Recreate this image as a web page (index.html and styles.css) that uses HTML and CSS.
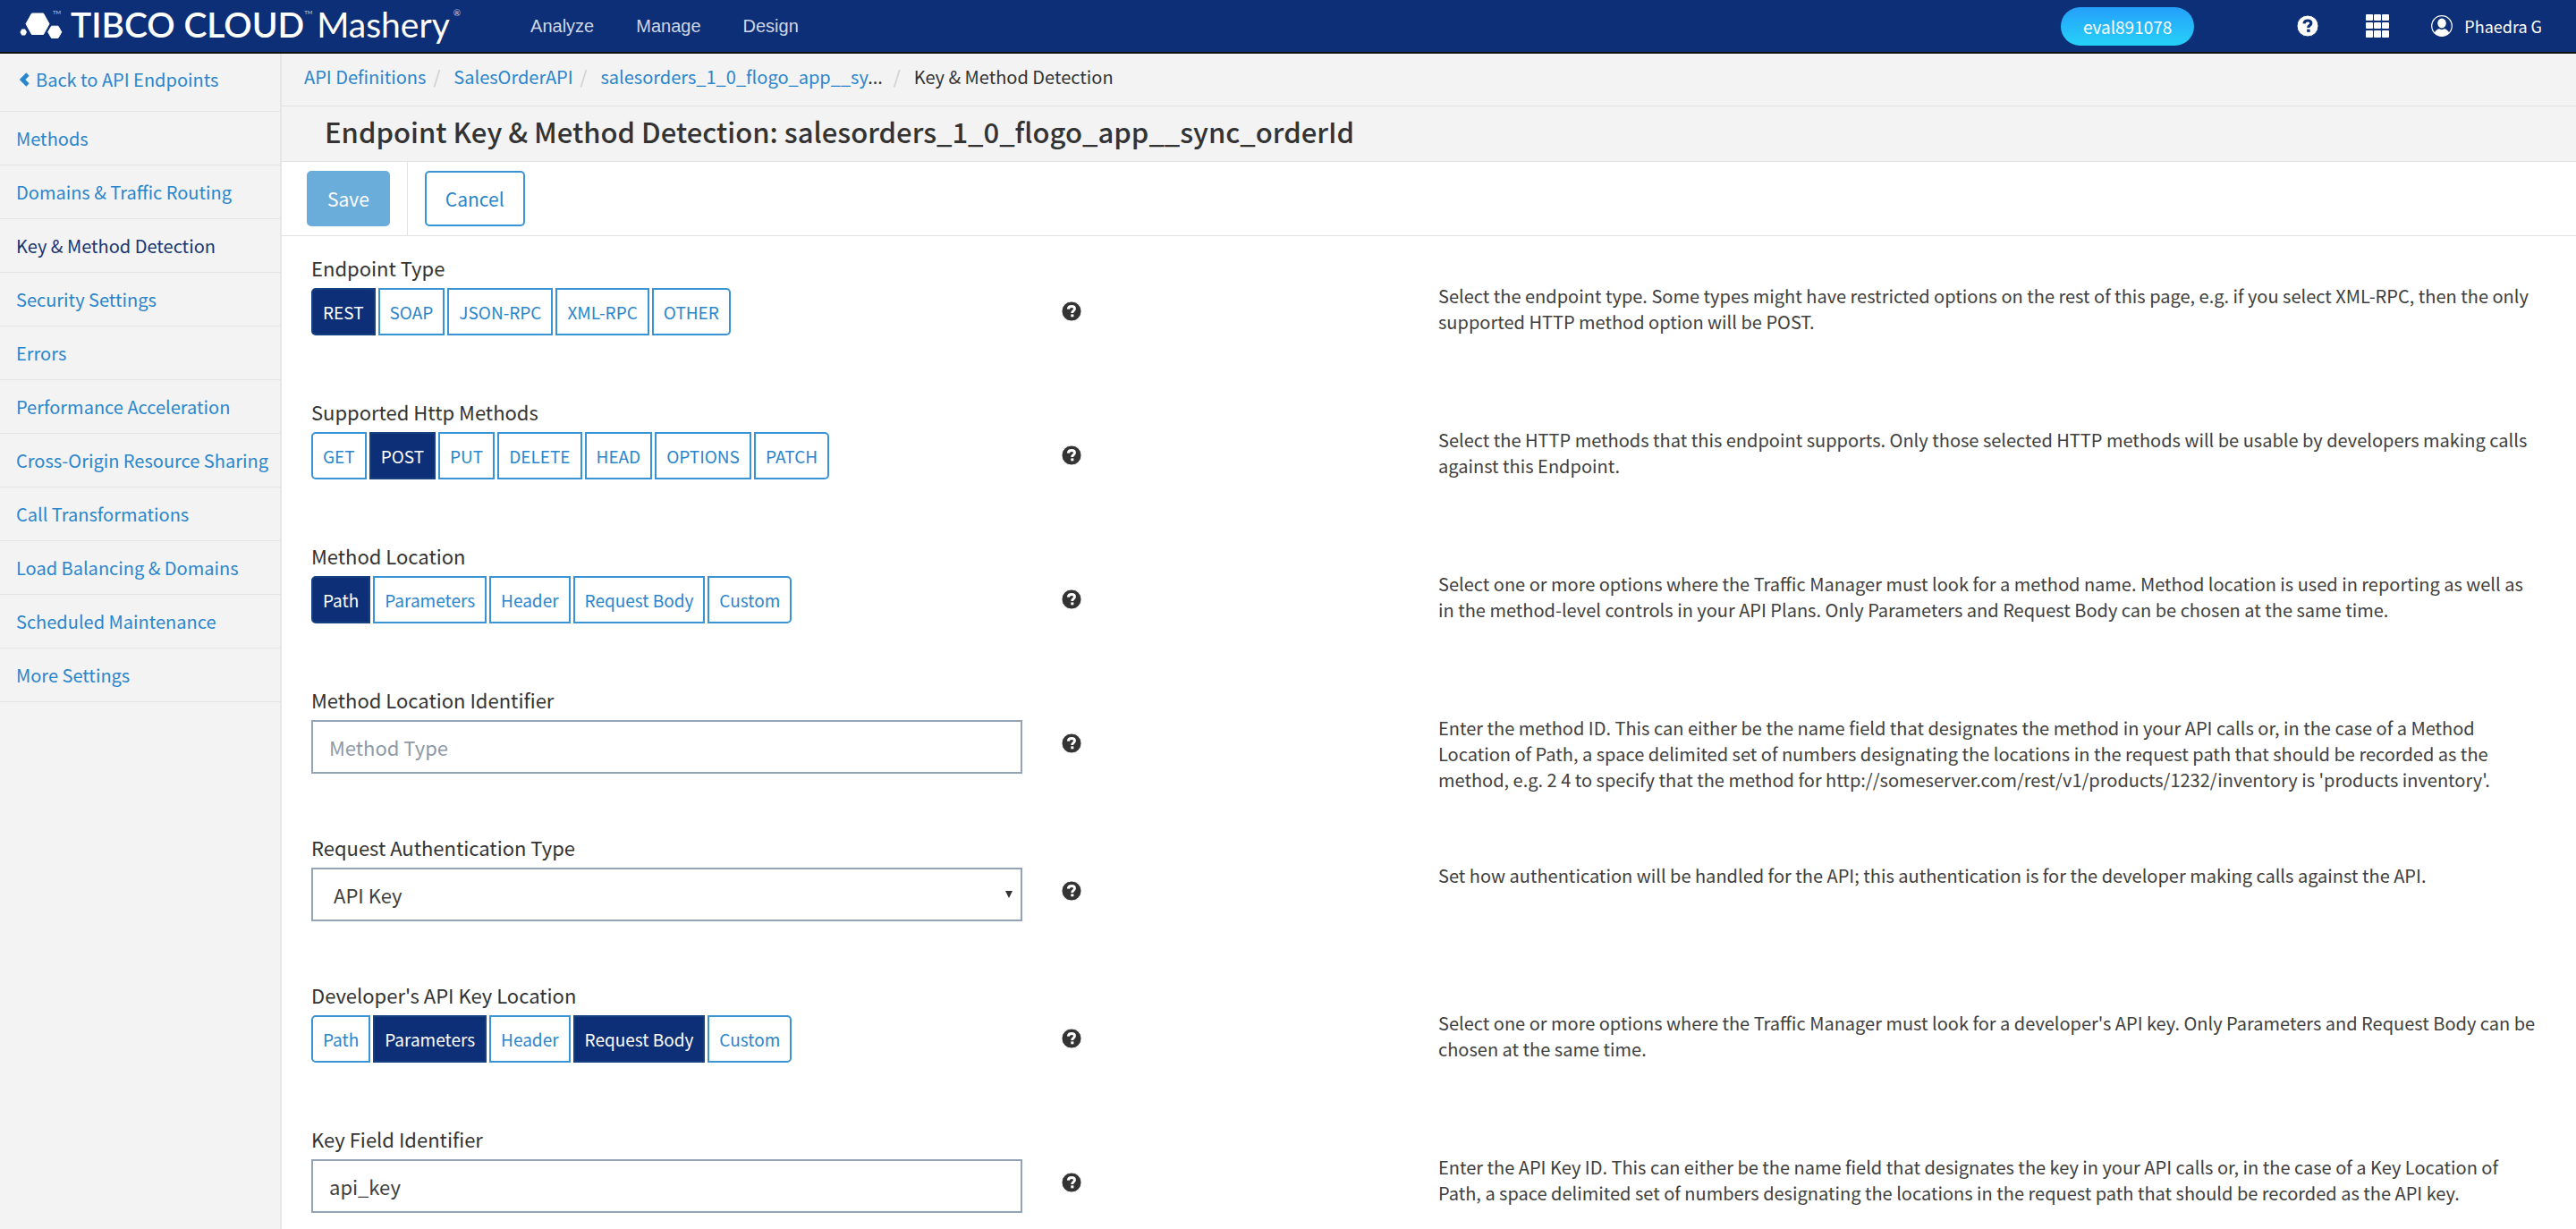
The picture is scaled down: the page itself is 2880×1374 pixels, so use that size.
FILE: index.html
```html
<!DOCTYPE html>
<html lang="en">
<head>
<meta charset="utf-8">
<title>Key &amp; Method Detection - TIBCO Cloud Mashery</title>
<link rel="stylesheet" href="styles.css">
</head>
<body>
<svg class="sprite" aria-hidden="true">
  <symbol id="help" viewBox="0 0 24 24">
    <circle cx="12" cy="12" r="12" fill="currentColor"/>
    <path class="mark" d="M8 9.300C8.200 7 9.900 6 12.100 6c2.200 0 3.700 1.100 3.700 3 0 2.500-3 2.500-3 4.600v.5" fill="none" stroke-width="3.200"/>
    <rect class="dot" x="11.200" y="15.700" width="3.400" height="3.200"/>
  </symbol>
</svg>

<header class="topbar">
  <a class="brand" href="#" aria-label="TIBCO Cloud Mashery">
    <svg class="brand-mark" viewBox="22 12 48 32" width="48" height="32" aria-hidden="true">
      <path d="M35.500 15h13L55 26.700l-6.500 11.800h-13L29 26.700z" fill="#fff" stroke="#fff" stroke-linejoin="round"/>
      <path d="M57.500 29.200h7.500l3.800 6.600-3.800 6.700h-7.500l-3.800-6.700z" fill="#fff" stroke="#fff" stroke-linejoin="round"/>
      <path d="M24.400 32.500h3.600l2 3.500-2 3.500h-3.600l-2-3.500z" fill="#fff"/>
      <text x="59" y="16" class="brand-mark-tm">TM</text>
    </svg>
    <span class="brand-name">TIBCO CLOUD</span>
    <span class="brand-tm">TM</span>
    <span class="brand-product">Mashery</span>
    <span class="brand-reg">®</span>
  </a>
  <nav class="topnav">
    <a href="#">Analyze</a>
    <a href="#">Manage</a>
    <a href="#">Design</a>
  </nav>
  <div class="tools">
    <button class="org" type="button">eval891078</button>
    <button class="tool tool-help" type="button" aria-label="Help"><svg width="24" height="24"><use href="#help"/></svg></button>
    <button class="tool tool-apps" type="button" aria-label="Apps">
      <svg width="26" height="26" viewBox="0 0 26 26" fill="#fff">
        <rect x="0" y="0" width="8" height="7" rx="1"/><rect x="9" y="0" width="8" height="7" rx="1"/><rect x="18" y="0" width="8" height="7" rx="1"/>
        <rect x="0" y="9" width="8" height="7" rx="1"/><rect x="9" y="9" width="8" height="7" rx="1"/><rect x="18" y="9" width="8" height="7" rx="1"/>
        <rect x="0" y="18" width="8" height="8" rx="1"/><rect x="9" y="18" width="8" height="8" rx="1"/><rect x="18" y="18" width="8" height="8" rx="1"/>
      </svg>
    </button>
    <button class="tool user" type="button">
      <svg width="24" height="24" viewBox="0 0 24 24">
        <circle cx="12" cy="12" r="11.300" fill="none" stroke="#fff" stroke-width="1.200"/>
        <ellipse cx="12" cy="9" rx="4.800" ry="5.400" fill="#fff"/>
        <path d="M3.800 19.500c1.400-2.700 3.600-4 5.400-4.200 1.800 1.100 3.800 1.100 5.600 0 1.800.2 4 1.500 5.400 4.200A11.300 11.300 0 0 1 12 23.300a11.300 11.300 0 0 1-8.200-3.800z" fill="#fff"/>
      </svg>
      <span>Phaedra G</span>
    </button>
  </div>
</header>

<div class="shell">
  <nav class="sidebar">
    <a class="back" href="#"><svg width="12" height="16" viewBox="0 0 12 16"><path d="M10 2 4 8l6 6" fill="none" stroke="currentColor" stroke-width="4.600"/></svg>Back to API Endpoints</a>
    <a href="#">Methods</a>
    <a href="#">Domains &amp; Traffic Routing</a>
    <a href="#" class="current" aria-current="page">Key &amp; Method Detection</a>
    <a href="#">Security Settings</a>
    <a href="#">Errors</a>
    <a href="#">Performance Acceleration</a>
    <a href="#">Cross-Origin Resource Sharing</a>
    <a href="#">Call Transformations</a>
    <a href="#">Load Balancing &amp; Domains</a>
    <a href="#">Scheduled Maintenance</a>
    <a href="#">More Settings</a>
  </nav>

  <main class="main">
    <nav class="breadcrumb" aria-label="Breadcrumb">
      <a href="#">API Definitions</a>
      <a href="#">SalesOrderAPI</a>
      <a href="#">salesorders_1_0_flogo_app__sy<span class="more">...</span></a>
      <span class="here">Key &amp; Method Detection</span>
    </nav>
    <h1 class="title">Endpoint Key &amp; Method Detection: salesorders_1_0_flogo_app__sync_orderId</h1>
    <div class="actions">
      <div class="action-save"><button class="btn btn-primary" type="button" disabled>Save</button></div>
      <button class="btn" type="button">Cancel</button>
    </div>

    <form class="settings">
      <div class="row">
        <div class="field" role="group" aria-labelledby="l1">
          <span class="label" id="l1">Endpoint Type</span>
          <div class="toggles">
            <button type="button" aria-pressed="true">REST</button>
            <button type="button" aria-pressed="false">SOAP</button>
            <button type="button" aria-pressed="false">JSON-RPC</button>
            <button type="button" aria-pressed="false">XML-RPC</button>
            <button type="button" aria-pressed="false">OTHER</button>
          </div>
        </div>
        <svg class="hint" viewBox="0 0 24 24"><use href="#help"/></svg>
        <p class="about">Select the endpoint type. Some types might have restricted options on the rest of this page, e.g. if you select XML-RPC, then the only supported HTTP method option will be POST.</p>
      </div>

      <div class="row">
        <div class="field" role="group" aria-labelledby="l2">
          <span class="label" id="l2">Supported Http Methods</span>
          <div class="toggles">
            <button type="button" aria-pressed="false">GET</button>
            <button type="button" aria-pressed="true">POST</button>
            <button type="button" aria-pressed="false">PUT</button>
            <button type="button" aria-pressed="false">DELETE</button>
            <button type="button" aria-pressed="false">HEAD</button>
            <button type="button" aria-pressed="false">OPTIONS</button>
            <button type="button" aria-pressed="false">PATCH</button>
          </div>
        </div>
        <svg class="hint" viewBox="0 0 24 24"><use href="#help"/></svg>
        <p class="about">Select the HTTP methods that this endpoint supports. Only those selected HTTP methods will be usable by developers making calls against this Endpoint.</p>
      </div>

      <div class="row">
        <div class="field" role="group" aria-labelledby="l3">
          <span class="label" id="l3">Method Location</span>
          <div class="toggles">
            <button type="button" aria-pressed="true">Path</button>
            <button type="button" aria-pressed="false">Parameters</button>
            <button type="button" aria-pressed="false">Header</button>
            <button type="button" aria-pressed="false">Request Body</button>
            <button type="button" aria-pressed="false">Custom</button>
          </div>
        </div>
        <svg class="hint" viewBox="0 0 24 24"><use href="#help"/></svg>
        <p class="about">Select one or more options where the Traffic Manager must look for a method name. Method location is used in reporting as well as in the method-level controls in your API Plans. Only Parameters and Request Body can be chosen at the same time.</p>
      </div>

      <div class="row">
        <div class="field">
          <label class="label" for="method-id">Method Location Identifier</label>
          <input class="control" id="method-id" type="text" placeholder="Method Type">
        </div>
        <svg class="hint" viewBox="0 0 24 24"><use href="#help"/></svg>
        <p class="about">Enter the method ID. This can either be the name field that designates the method in your API calls or, in the case of a Method Location of Path, a space delimited set of numbers designating the locations in the request path that should be recorded as the method, e.g. 2 4 to specify that the method for http://someserver.com/rest/v1/products/1232/inventory is 'products inventory'.</p>
      </div>

      <div class="row">
        <div class="field">
          <label class="label" for="auth">Request Authentication Type</label>
          <div class="picker">
            <select class="control" id="auth"><option>API Key</option></select>
            <svg class="arrow" width="8" height="8" viewBox="0 0 8 8"><path d="M0 0h8L4 8z" fill="#333"/></svg>
          </div>
        </div>
        <svg class="hint" viewBox="0 0 24 24"><use href="#help"/></svg>
        <p class="about">Set how authentication will be handled for the API; this authentication is for the developer making calls against the API.</p>
      </div>

      <div class="row">
        <div class="field" role="group" aria-labelledby="l6">
          <span class="label" id="l6">Developer's API Key Location</span>
          <div class="toggles">
            <button type="button" aria-pressed="false">Path</button>
            <button type="button" aria-pressed="true">Parameters</button>
            <button type="button" aria-pressed="false">Header</button>
            <button type="button" aria-pressed="true">Request Body</button>
            <button type="button" aria-pressed="false">Custom</button>
          </div>
        </div>
        <svg class="hint" viewBox="0 0 24 24"><use href="#help"/></svg>
        <p class="about">Select one or more options where the Traffic Manager must look for a developer's API key. Only Parameters and Request Body can be chosen at the same time.</p>
      </div>

      <div class="row">
        <div class="field">
          <label class="label" for="key-field">Key Field Identifier</label>
          <input class="control" id="key-field" type="text" value="api_key">
        </div>
        <svg class="hint" viewBox="0 0 24 24"><use href="#help"/></svg>
        <p class="about">Enter the API Key ID. This can either be the name field that designates the key in your API calls or, in the case of a Key Location of Path, a space delimited set of numbers designating the locations in the request path that should be recorded as the API key.</p>
      </div>
    </form>
  </main>
</div>
</body>
</html>
```
FILE: styles.css
```css
:root {
  --navy: #0c2f77;
  --link: #2a86cc;
  --line: #e2e2e2;
  --panel: #f3f3f3;
  --text: #333;
}

* { box-sizing: border-box; }

body {
  display: flex;
  flex-direction: column;
  min-height: 100vh;
  margin: 0;
  background: #fff;
  color: var(--text);
  font: 20px/28px "Noto Sans CJK JP", "Noto Sans", sans-serif;
}

a { color: var(--link); text-decoration: none; }

button, input, select { font-family: inherit; }

.sprite { display: none; }

/* Top bar */
.topbar {
  display: flex;
  align-items: center;
  height: 60px;
  padding: 0 38px 0 22px;
  border-bottom: 2px solid #111;
  background: var(--navy);
}

.brand {
  display: flex;
  align-items: flex-start;
  height: 58px;
  color: #fff;
  font: 39px/54px Lato, sans-serif;
}

.brand-mark { margin: 12px 9px 0 0; overflow: visible; }
.brand-mark-tm { fill: #c5cfe4; font: 6px Lato, sans-serif; }
.brand-name { font-weight: 600; }
.brand-tm { width: 14px; color: #c5cfe4; font-size: 6px; line-height: 28px; }
.brand-reg { margin-left: 4px; color: #c5cfe4; font-size: 10px; line-height: 28px; }

.topnav {
  display: flex;
  gap: 47px;
  margin-left: 78px;
  font-family: "Liberation Sans", Arial, sans-serif;
}

.topnav a { color: #cfd7e6; }

.tools { display: flex; align-items: center; margin-left: auto; }

.org {
  height: 43px;
  padding: 0 25px;
  border: 0;
  border-radius: 22px;
  background: linear-gradient(#259ffb, #25d2f8);
  color: #fff;
  font-size: 19px;
}

.tool {
  display: flex;
  align-items: center;
  gap: 13px;
  padding: 0;
  border: 0;
  background: none;
  color: #fff;
  font-size: 18px;
}

.tool-help { margin-left: 115px; stroke: var(--navy); fill: var(--navy); }
.tool-apps { margin-left: 53px; }
.user { margin-left: 47px; }
.dot { stroke: none; }

/* Side menu */
.shell { display: flex; flex: 1; }

.sidebar {
  flex: none;
  width: 315px;
  border-right: 2px solid #e6e6e6;
  background: var(--panel);
}

.sidebar a {
  display: flex;
  align-items: center;
  height: 60px;
  padding-left: 18px;
  border-bottom: 1px solid var(--line);
  white-space: nowrap;
}

.sidebar .back { gap: 7px; height: 65px; padding: 0 0 6px 21px; }
.sidebar .current { color: #19356f; }

/* Page heading */
.main { flex: 1; min-width: 0; }

.breadcrumb {
  display: flex;
  height: 59px;
  padding: 12px 25px;
  border-bottom: 1px solid var(--line);
  background: var(--panel);
}

.breadcrumb a::after { content: "/"; padding: 0 15px 0 8px; color: #ccc; }
.more { margin-right: 4px; color: var(--text); }

.title {
  margin: 0;
  padding: 6px 48px 11px;
  border-bottom: 1px solid var(--line);
  background: var(--panel);
  font-size: 31px;
  font-weight: 500;
  line-height: 44px;
}

.actions {
  display: flex;
  align-items: center;
  gap: 19px;
  height: 83px;
  padding-left: 28px;
  border-bottom: 1px solid var(--line);
}

.action-save {
  display: flex;
  align-items: center;
  height: 82px;
  padding-right: 19px;
  border-right: 1px solid var(--line);
}

.btn {
  height: 62px;
  padding: 0 21px;
  border: 2px solid #3a94d4;
  border-radius: 5px;
  background: #fff;
  color: var(--link);
  font-size: 21px;
}

.btn-primary { border-color: #6badda; background: #6badda; color: #fff; }

/* Settings */
.settings {
  display: flex;
  flex-direction: column;
  gap: 66px;
  padding: 19px 44px 0 33px;
}

.row {
  display: grid;
  grid-template-columns: 795fr 465fr 1228fr;
  align-items: start;
}

.label {
  display: block;
  margin-bottom: 7px;
  font-size: 22px;
  line-height: 32px;
}

.toggles { display: flex; gap: 3px; margin-bottom: 3px; }

.toggles button {
  height: 53px;
  padding: 0 11px;
  border: 2px solid #3a94d4;
  background: #fff;
  color: var(--link);
  font-size: 19px;
}

.toggles button:first-child { border-radius: 5px 0 0 5px; }
.toggles button:last-child { border-radius: 0 5px 5px 0; }

.toggles button[aria-pressed="true"] {
  border-color: #16407f;
  background: var(--navy);
  color: #fff;
}

.control {
  width: 100%;
  height: 60px;
  padding: 0 18px;
  border: 2px solid #95a3b6;
  border-radius: 0;
  background: #fff;
  color: #404040;
  font-size: 22px;
}

.control::placeholder { color: #8e99a8; }

.picker { display: grid; align-items: center; }
.picker > * { grid-area: 1 / 1; }
.picker .control { padding: 0 23px; appearance: none; }
.arrow { justify-self: end; margin-right: 11px; pointer-events: none; }

.hint {
  width: 22px;
  height: 22px;
  margin: 54px 0 0 44px;
  color: #333;
  fill: #fff;
  stroke: #fff;
}

.about {
  height: 92px;
  margin: 0;
  padding-top: 33px;
  color: #404040;
  line-height: 29px;
}
```
